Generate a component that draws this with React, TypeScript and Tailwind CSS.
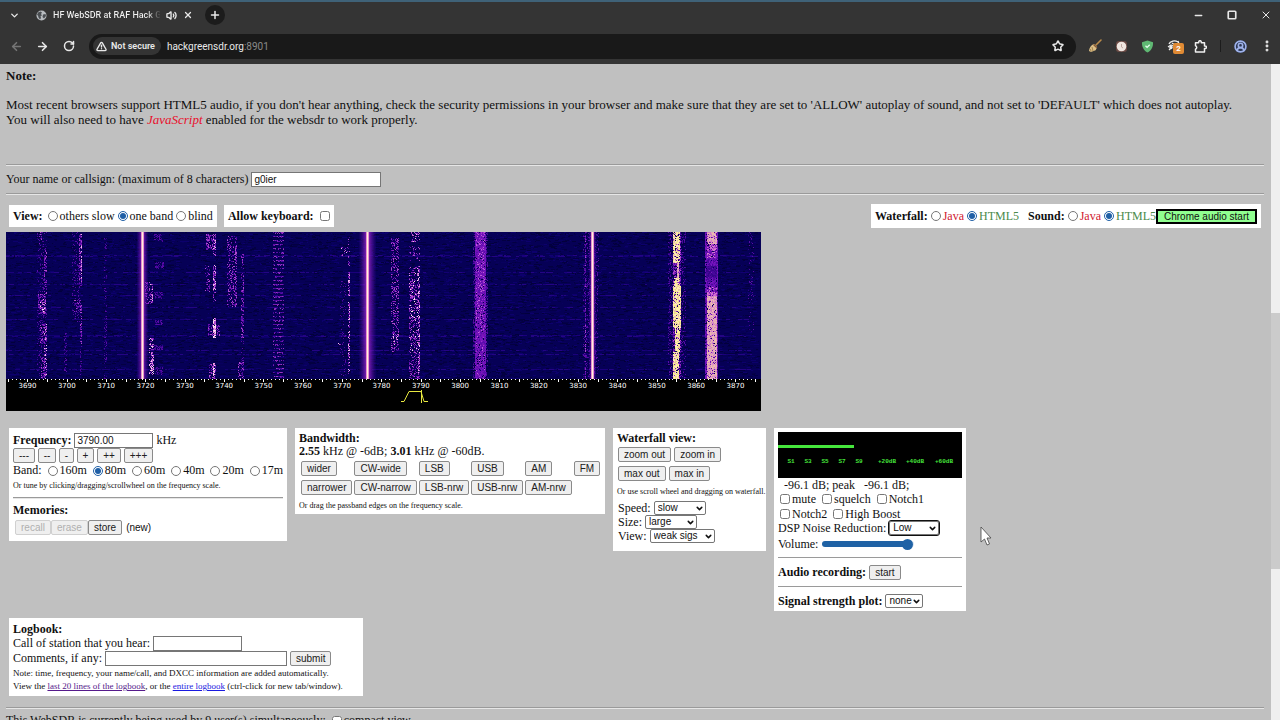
import {
  ArrowLeft,
  ArrowRight,
  ChevronDown,
  CircleUserRound,
  EllipsisVertical,
  Minus,
  Plus,
  RotateCw,
  Square,
  Star,
  TriangleAlert,
  Volume2,
  X,
} from "lucide-react";

// ---------- waterfall ----------

const WF_WIDTH = 755;
const WF_HEIGHT = 147;
const KHZ = 3.933; // px per kHz

const DIM = ["#2c0084", "#4a089a", "#5a0ca6"];
const VIOLET = ["#4a089a", "#6a10b0", "#8a22c0", "#b04acc"];
const PINK = ["#6a10b0", "#8a22c0", "#c060d0", "#f0b8ec"];
const HOT = ["#b04ad0", "#f0a0e0", "#ffe0f0"];
const YELLOW = ["#f4e48a", "#fff4a0", "#ffe8c0", "#e8c0a8"];
const PEACH = ["#e0a0c0", "#e4acb4", "#d080c8", "#ecbcb0"];
const ORCHID = ["#a838c8", "#c868d0", "#d880cc"];

type Streak = {
  x: number;
  w: number;
  y0: number;
  y1: number;
  density: number;
  colors: string[];
};

const s = (
  x: number,
  w: number,
  y0: number,
  y1: number,
  density: number,
  colors: string[]
): Streak => ({ x, w, y0, y1, density, colors });

const streaks: Streak[] = [
  // 3694
  s(31, 10, 0, 147, 0.16, DIM),
  s(33, 4, 0, 12, 0.3, VIOLET),
  s(32, 8, 62, 82, 0.5, VIOLET),
  s(34, 6, 66, 80, 0.15, HOT),
  s(38, 3, 18, 62, 0.35, VIOLET),
  s(34, 7, 92, 112, 0.3, VIOLET),
  s(38, 3, 92, 147, 0.4, PINK),
  s(35, 4, 125, 147, 0.35, VIOLET),
  // 3699, 3703
  s(58, 3, 96, 140, 0.3, DIM),
  s(66, 8, 0, 90, 0.14, DIM),
  s(73, 3, 0, 54, 0.45, VIOLET),
  s(75, 1, 0, 54, 0.4, PINK),
  s(68, 8, 68, 80, 0.22, VIOLET),
  s(74, 2, 70, 112, 0.5, VIOLET),
  s(74, 2, 112, 147, 0.3, DIM),
  s(98, 3, 5, 147, 0.2, DIM),
  // 3721
  s(139, 5, 50, 72, 0.35, VIOLET),
  s(144, 3, 52, 72, 0.45, PINK),
  s(148, 9, 2, 10, 0.5, DIM),
  s(149, 9, 30, 37, 0.5, DIM),
  s(148, 9, 60, 67, 0.6, DIM),
  s(149, 8, 88, 93, 0.6, DIM),
  s(148, 9, 113, 118, 0.6, DIM),
  s(149, 8, 135, 143, 0.5, DIM),
  s(143, 5, 106, 143, 0.45, PINK),
  s(145, 2, 120, 143, 0.5, HOT),
  // 3737
  s(200, 10, 2, 18, 0.5, VIOLET),
  s(207, 3, 6, 24, 0.6, PINK),
  s(199, 5, 33, 62, 0.35, VIOLET),
  s(207, 3, 33, 58, 0.7, PINK),
  s(207, 3, 58, 72, 0.3, VIOLET),
  s(202, 12, 92, 104, 0.35, VIOLET),
  s(207, 3, 86, 106, 0.8, HOT),
  s(203, 7, 132, 147, 0.4, VIOLET),
  s(207, 2, 131, 147, 0.8, HOT),
  // 3743
  s(221, 10, 4, 75, 0.3, VIOLET),
  s(229, 2, 5, 75, 0.4, VIOLET),
  s(235, 3, 22, 80, 0.45, VIOLET),
  s(235, 3, 82, 106, 0.4, VIOLET),
  s(235, 3, 106, 130, 0.2, DIM),
  s(232, 6, 130, 147, 0.35, VIOLET),
  // 3771
  s(335, 7, 15, 24, 0.25, PINK),
  s(342, 2, 5, 40, 0.3, VIOLET),
  s(342, 2, 40, 64, 0.6, PINK),
  s(342, 2, 70, 142, 0.55, PINK),
  s(334, 6, 48, 147, 0.12, DIM),
  s(332, 3, 111, 114, 0.5, PINK),
  // 3783
  s(385, 8, 6, 120, 0.3, VIOLET),
  s(386, 7, 100, 118, 0.2, PINK),
  // 3788
  s(405, 9, 0, 10, 0.3, PINK),
  s(403, 11, 14, 30, 0.2, VIOLET),
  s(403, 11, 34, 44, 0.3, PINK),
  s(403, 11, 46, 80, 0.34, VIOLET),
  s(403, 11, 84, 147, 0.34, VIOLET),
  s(412, 2, 34, 147, 0.4, PINK),
  s(403, 11, 46, 120, 0.1, HOT),
  // 3805
  s(469, 11, 0, 147, 0.9, ["#5a0cae", "#6c10b8", "#7c16c0", "#7214b4"]),
  s(470, 9, 0, 88, 0.2, ["#a036cc", "#c05cd8"]),
  s(470, 9, 88, 147, 0.1, ["#a036cc", "#c05cd8"]),
  s(467, 2, 0, 147, 0.4, DIM),
  s(480, 2, 0, 147, 0.4, DIM),
  // 3830 sideband
  s(579, 1, 0, 147, 0.6, VIOLET),
  s(577, 16, 0, 147, 0.22, DIM),
  // 3855
  s(662, 18, 0, 147, 0.25, DIM),
  s(667, 8, 0, 147, 0.6, VIOLET),
  s(667, 7, 0, 31, 0.75, YELLOW),
  s(671, 2, 31, 50, 0.9, PEACH),
  s(668, 6, 46, 62, 0.85, YELLOW),
  s(667, 8, 54, 96, 0.85, YELLOW),
  s(669, 5, 96, 120, 0.85, YELLOW),
  s(667, 6, 120, 147, 0.85, YELLOW),
  // 3864, fades down to violet and back
  s(699, 13, 0, 147, 0.85, ["#6a10b8", "#7c18c0", "#5808a0"]),
  s(701, 10, 0, 12, 0.85, PEACH),
  s(701, 10, 12, 18, 0.7, ORCHID),
  s(701, 10, 18, 26, 0.35, ORCHID),
  s(700, 11, 26, 34, 0.6, ["#48089c", "#6a10b8"]),
  s(700, 11, 34, 46, 0.9, ["#38048c", "#48089c"]),
  s(700, 11, 46, 54, 0.5, ["#48089c", "#6a10b8"]),
  s(701, 10, 54, 60, 0.35, ORCHID),
  s(701, 10, 60, 68, 0.8, ORCHID),
  s(701, 10, 64, 147, 0.88, PEACH),
  s(742, 6, 0, 100, 0.12, DIM),
];

function drawWaterfall() {
  // small LCG so that the noise is the same on every render
  let seed = 3790;
  const rnd = () => {
    seed = (seed * 1664525 + 1013904223) >>> 0;
    return seed / 4294967296;
  };
  const runs: { color: string; d: string[] }[] = [];
  const layer = (colors: string[]) => {
    const start = runs.length;
    colors.forEach((color) => runs.push({ color, d: [] }));
    return (x: number, y: number, w: number) => {
      const i = start + Math.floor(rnd() * colors.length);
      runs[i].d.push(`M${x} ${y}h${w}v1h-${w}z`);
    };
  };

  // background noise
  const noise = layer(["#02003c", "#04004a", "#08005e", "#0c006c", "#030042"]);
  for (let i = 0; i < 15000; i++) {
    const w = 1 + Math.floor(rnd() * 5);
    noise(Math.floor(rnd() * (WF_WIDTH - w)), Math.floor(rnd() * WF_HEIGHT), w);
  }

  // static crashes, faint lines over the whole width
  const crash = layer(["#120072", "#1a007c", "#240484"]);
  [23, 24, 40, 52, 63, 75, 87, 103, 104, 118, 122, 137].forEach((y) => {
    for (let x = 0; x < WF_WIDTH - 6; x += 3) {
      if (rnd() < 0.55) crash(x, y, 2 + Math.floor(rnd() * 4));
    }
  });

  streaks.forEach((k) => {
    const put = layer(k.colors);
    for (let y = k.y0; y < k.y1; y++) {
      for (let x = k.x; x < k.x + k.w; x++) {
        if (rnd() < k.density) put(x, y, 1);
      }
    }
  });

  // 3753, comb of short bars
  const comb = layer(["#5a0ca8", "#7a1cb4", "#9838c0", "#42089a"]);
  for (let y = 0; y < WF_HEIGHT; y += 4) {
    for (let x = 267; x < 278; x++) {
      if (rnd() < 0.75) comb(x, y, 1);
      if (rnd() < 0.25) comb(x, y + 1, 1);
    }
  }
  return runs;
}

const waterfall = drawWaterfall();

const carriers = [
  { x: 136, glow: 6 },
  { x: 361, glow: 9 },
  { x: 586, glow: 4 },
];

const Waterfall = () => (
  <svg
    width={WF_WIDTH}
    height={179}
    viewBox={`0 0 ${WF_WIDTH} 179`}
    className="block max-w-none bg-black"
    role="img"
    aria-label="Waterfall 3685 to 3876 kHz"
  >
    <defs>
      <linearGradient id="glow">
        <stop offset="0" stopColor="#5008a8" stopOpacity="0" />
        <stop offset="0.5" stopColor="#9a28c8" />
        <stop offset="1" stopColor="#5008a8" stopOpacity="0" />
      </linearGradient>
    </defs>
    <rect width={WF_WIDTH} height={WF_HEIGHT} fill="#060056" />
    <g shapeRendering="crispEdges">
      {waterfall.map((run, i) => (
        <path key={i} d={run.d.join("")} fill={run.color} />
      ))}
    </g>
    {carriers.map(({ x, glow }) => (
      <g key={x}>
        <rect x={x - glow + 0.5} width={glow * 2} height={WF_HEIGHT} fill="url(#glow)" />
        <rect x={x - 1} width="3" height={WF_HEIGHT} fill="#e890cc" />
        <rect x={x} width="1" height={WF_HEIGHT} fill="#fff0dc" />
      </g>
    ))}

    {/* frequency scale */}
    {Array.from({ length: 191 }, (_, i) => (
      <rect key={i} x={Math.round(1.8 + i * KHZ)} y="147" width="1" height={i % 5 === 0 ? 3 : 1} fill="#fff" />
    ))}
    {Array.from({ length: 19 }, (_, i) => (
      <text
        key={i}
        x={21.5 + i * KHZ * 10}
        y="156"
        textAnchor="middle"
        fill="#fff"
        fontSize="7"
        fontFamily="'DejaVu Sans', sans-serif"
      >
        {3690 + i * 10}
      </text>
    ))}
    <path d="M395 169.5h3l5-10h12l3 10h4M415.5 158v13" fill="none" stroke="#e8e840" strokeWidth="1" />
  </svg>
);

// ---------- S meter ----------

const meterLabels: [number, string][] = [
  [13, "S1"],
  [30, "S3"],
  [47, "S5"],
  [64, "S7"],
  [81, "S9"],
  [109, "+20dB"],
  [137, "+40dB"],
  [166, "+60dB"],
];

const SMeter = () => (
  <svg width="184" height="46" viewBox="0 0 184 46" className="block bg-black" role="img" aria-label="S meter">
    <rect y="13" width="76" height="3" fill="#46e63c" />
    {meterLabels.map(([x, label]) => (
      <text
        key={label}
        x={x}
        y="31"
        textAnchor="middle"
        fill="#46e63c"
        fontSize="6"
        fontWeight="bold"
        fontFamily="'Liberation Mono', monospace"
      >
        {label}
      </text>
    ))}
  </svg>
);

// ---------- form bits ----------

const sans = "font-['Liberation_Sans',sans-serif]";

const Btn = ({ children, disabled = false, className = "px-[5px]" }) => (
  <button
    type="button"
    disabled={disabled}
    className={`${sans} block h-[15px] rounded-[2px] border border-[#8a8a8a] bg-[#efefef] text-[10px] leading-[13px] whitespace-nowrap text-[#202020] disabled:border-[#d0d0d0] disabled:text-[#b0b0b0] ${className}`}
  >
    {children}
  </button>
);

const Radio = ({ name, label, checked = false, className = "" }) => (
  <label className={`flex items-center gap-[2px] whitespace-nowrap ${className}`}>
    <input type="radio" name={name} defaultChecked={checked} className="size-[10px] accent-[#1f5fa6]" />
    {label}
  </label>
);

const Check = ({ label }) => (
  <label className="flex items-center gap-[2px]">
    <input type="checkbox" className="size-[10px]" />
    {label}
  </label>
);

const Select = ({ id, options, className = "" }) => (
  <span className="inline-grid items-center">
    <select
      id={id}
      className={`${sans} col-start-1 row-start-1 h-[14px] appearance-none rounded-[2px] border border-[#767676] bg-white px-[3px] text-[10px] leading-[12px] ${className}`}
    >
      {options.map((o) => (
        <option key={o}>{o}</option>
      ))}
    </select>
    <ChevronDown
      size={9}
      strokeWidth={4}
      className="pointer-events-none col-start-1 row-start-1 mr-[2px] justify-self-end"
    />
  </span>
);

const field = "border border-[#767676] bg-white px-[2px] text-[10px] font-['Liberation_Sans',sans-serif]";

const Rule = () => <hr className="border-0 border-t border-[#9a9a9a] shadow-[0_1px_0_#e6e6e6]" />;

// ---------- browser frame ----------

const BrowserBar = () => (
  <header className="shrink-0 border-t-2 border-[#3f6278] bg-[#343434] font-['Roboto',sans-serif] text-[#e8e8e8]">
    <div className="flex h-[26px] items-center pr-2 pl-[9px]">
      <button type="button" aria-label="Search tabs">
        <ChevronDown size={11} strokeWidth={3} />
      </button>
      <div className="ml-4 flex items-center">
        <svg width="11" height="11" viewBox="0 0 22 22" aria-hidden="true">
          <circle cx="11" cy="11" r="10" fill="#b8bcc0" />
          <path d="M4 5l5-2 3 2-2 3 2 3-3 1 1 4-2 3-3-4-1-4-2-1zM14 9l5-1 1 4-4 5-3-3z" fill="#4a4e52" />
        </svg>
        <span className="ml-[6px] w-[107px] bg-linear-to-r from-[#f0f0f0] from-88% to-[#444] bg-clip-text text-[9px] font-medium whitespace-nowrap text-transparent">
          HF WebSDR at RAF Hack Gr
        </span>
        <Volume2 size={11} strokeWidth={3} className="ml-[6px]" />
        <button type="button" aria-label="Close tab" className="ml-[6px]">
          <X size={10} strokeWidth={3} />
        </button>
      </div>
      <button
        type="button"
        aria-label="New tab"
        className="ml-3 flex size-5 items-center justify-center rounded-full bg-[#1c1c1c]"
      >
        <Plus size={12} strokeWidth={3} />
      </button>
      <div className="ml-auto flex items-center gap-[23px]">
        <button type="button" aria-label="Minimize">
          <Minus size={11} strokeWidth={3} />
        </button>
        <button type="button" aria-label="Maximize">
          <Square size={10} strokeWidth={4} />
        </button>
        <button type="button" aria-label="Close">
          <X size={12} strokeWidth={2} />
        </button>
      </div>
    </div>

    <div className="flex h-9 items-center pr-[6px] pl-[10px]">
      <button type="button" aria-label="Back" className="text-[#757575]">
        <ArrowLeft size={13} strokeWidth={3} />
      </button>
      <button type="button" aria-label="Forward" className="ml-[13px]">
        <ArrowRight size={13} strokeWidth={3} />
      </button>
      <button type="button" aria-label="Reload" className="ml-[14px]">
        <RotateCw size={12} strokeWidth={3} />
      </button>
      <div className="ml-[14px] flex h-[25px] flex-1 items-center rounded-full bg-[#191919] pr-3 pl-1">
        <span className="flex h-[18px] items-center gap-1 rounded-full bg-[#343434] pr-[6px] pl-[3px] text-[9px] font-semibold">
          <TriangleAlert size={11} strokeWidth={3} />
          Not secure
        </span>
        <span className="ml-[6px] text-[10px]">
          hackgreensdr.org<span className="text-[#8a8a8a]">:8901</span>
        </span>
        <Star size={12} strokeWidth={3} className="ml-auto" />
      </div>
      <div className="ml-3 flex items-center gap-[13px]">
        <svg width="14" height="14" viewBox="0 0 14 14" aria-hidden="true">
          <path d="M13 1L8 6" stroke="#b98a4a" strokeWidth="1.6" strokeLinecap="round" />
          <path d="M6 5l3.2 3.2-1.6 3L3 13l-2-1c.2-3 2-6 5-7z" fill="#dcbf86" />
          <path d="M5.5 5.5l3.3 3.3" stroke="#8a5a34" strokeWidth="1.2" />
          <path d="M4 8l1 4M2.5 10l.5 2.5" stroke="#8a6a3a" strokeWidth=".7" />
        </svg>
        <svg width="13" height="13" viewBox="0 0 13 13" aria-hidden="true">
          <rect x="1" y="1" width="11" height="11" rx="3" fill="#6a4a44" />
          <circle cx="6.5" cy="6.5" r="4.8" fill="#efe6e0" />
          <path d="M6.5 4v3l1.5 1" fill="none" stroke="#c0a8a0" />
        </svg>
        <svg width="13" height="13" viewBox="0 0 13 13" aria-hidden="true">
          <path d="M6.5.5l5.5 1.8c.2 4.7-1.5 8.2-5.5 10.2C2.500 10.5.8 7 1 2.3z" fill="#5fb873" />
          <path d="M4.5 5.8l1.6 1.6 2.6-2.6" fill="none" stroke="#e8fff0" strokeWidth="1.3" />
        </svg>
        <span className="relative">
          <svg width="14" height="14" viewBox="0 0 14 14" aria-hidden="true">
            <path
              d="M2 5c1-3 6-4 9-2M1 8l3-2 2 1M5 4l3 2 4-1M2 11l2-2M11 2l1 3"
              fill="none"
              stroke="#f0f0f0"
              strokeWidth="1.3"
            />
            <circle cx="4" cy="8.5" r="1.7" fill="#f0f0f0" />
          </svg>
          <span className="absolute top-1 left-[6px] flex size-[11px] items-center justify-center rounded-[2px] bg-[#e08a34] text-[8px] font-bold text-white">
            2
          </span>
        </span>
        <svg width="13" height="13" viewBox="0 0 13 13" aria-hidden="true">
          <path
            d="M1.5 2.8h3.2V2a1.3 1.3 0 0 1 2.6 0v.8h3.2V6h.6a1.3 1.3 0 0 1 0 2.6h-.6V12h-9V9.2a1.8 1.8 0 0 0 0-3.4z"
            fill="none"
            stroke="#f0f0f0"
            strokeWidth="1.5"
            strokeLinejoin="round"
          />
        </svg>
        <span className="h-3 w-px bg-[#1c1c1c]" />
        <button type="button" aria-label="Profile" className="rounded-full bg-[#2a3550] text-[#9fb2ea]">
          <CircleUserRound size={13} strokeWidth={3} className="block" />
        </button>
        <button type="button" aria-label="Menu">
          <EllipsisVertical size={14} strokeWidth={3} />
        </button>
      </div>
    </div>
  </header>
);

// ---------- panels ----------

const Frequency = () => (
  <section className="w-[278px] bg-white px-1 pt-1 pb-[6px]">
    <div className="flex h-4 items-center gap-[3px]">
      <label htmlFor="freq" className="font-bold">
        Frequency:
      </label>
      <input id="freq" defaultValue="3790.00" className={`${field} h-[15px] w-[79px]`} />
      kHz
    </div>
    <div className="flex gap-[3px]">
      <Btn className="w-[22px]">---</Btn>
      <Btn className="w-[18px]">--</Btn>
      <Btn className="w-[15px]">-</Btn>
      <Btn className="w-[17px]">+</Btn>
      <Btn className="w-[24px]">++</Btn>
      <Btn className="w-[29px]">+++</Btn>
    </div>
    <div className="flex justify-between">
      Band:
      <Radio name="band" label="160m" />
      <Radio name="band" label="80m" checked />
      <Radio name="band" label="60m" />
      <Radio name="band" label="40m" />
      <Radio name="band" label="20m" />
      <Radio name="band" label="17m" />
    </div>
    <p className="pb-1 text-[8px]">Or tune by clicking/dragging/scrollwheel on the frequency scale.</p>
    <Rule />
    <p className="pt-[5px] font-bold">Memories:</p>
    <div className="flex items-center pt-[2px] pl-[2px]">
      <Btn disabled>recall</Btn>
      <Btn disabled>erase</Btn>
      <Btn>store</Btn>
      <span className={`${sans} ml-1 text-[10px]`}>(new)</span>
    </div>
  </section>
);

const bandwidthRows = [
  ["wider", "CW-wide", "LSB", "USB", "AM", "FM"],
  ["narrower", "CW-narrow", "LSB-nrw", "USB-nrw", "AM-nrw"],
];

const Bandwidth = () => (
  <section className="w-[310px] bg-white px-1 pt-1 pb-px">
    <p className="leading-[13px] font-bold">Bandwidth:</p>
    <p className="leading-[13px]">
      <b>2.55</b> kHz @ -6dB; <b>3.01</b> kHz @ -60dB.
    </p>
    <table className="border-separate border-spacing-[2px]">
      <tbody>
        {bandwidthRows.map((row) => (
          <tr key={row[0]}>
            {row.map((mode) => (
              <td key={mode} className="h-[17px] p-0 align-middle">
                <Btn>{mode}</Btn>
              </td>
            ))}
          </tr>
        ))}
      </tbody>
    </table>
    <p className="text-[8px]">Or drag the passband edges on the frequency scale.</p>
  </section>
);

const WaterfallView = () => (
  <section className="w-[153px] bg-white px-1 pt-[3px] pb-2 leading-[14px]">
    <p className="font-bold">Waterfall view:</p>
    <div className="flex gap-[3px] pt-[2px] pl-px">
      <Btn>zoom out</Btn>
      <Btn>zoom in</Btn>
    </div>
    <div className="flex gap-[3px] pt-1 pl-px">
      <Btn>max out</Btn>
      <Btn>max in</Btn>
    </div>
    <p className="pt-1 pb-[2px] text-[8px] whitespace-nowrap">Or use scroll wheel and dragging on waterfall.</p>
    <div className="flex gap-[3px] pl-px">
      <label htmlFor="speed">Speed:</label>
      <Select id="speed" options={["slow", "medium", "fast"]} className="w-[52px]" />
    </div>
    <div className="flex gap-[3px] pl-px">
      <label htmlFor="size">Size:</label>
      <Select id="size" options={["large", "medium", "small"]} className="w-[52px]" />
    </div>
    <div className="flex gap-[3px] pl-px">
      <label htmlFor="view">View:</label>
      <Select id="view" options={["weak sigs", "strong sigs"]} className="w-[65px]" />
    </div>
  </section>
);

const Receiver = () => (
  <section className="w-[192px] bg-white px-1 pt-1 pb-[2px] leading-[14px]">
    <SMeter />
    <p className="pl-[6px]">-96.1 dB; peak &nbsp; -96.1 dB;</p>
    <div className="flex gap-[6px] pl-[2px]">
      <Check label="mute" />
      <Check label="squelch" />
      <Check label="Notch1" />
    </div>
    <div className="flex gap-[6px] pt-px pl-[2px]">
      <Check label="Notch2" />
      <Check label="High Boost" />
    </div>
    <div className="flex gap-[3px]">
      <label htmlFor="dsp">DSP Noise Reduction:</label>
      <Select
        id="dsp"
        options={["Low", "Off", "Medium", "High"]}
        className="w-[50px] border-[#101010] outline outline-[#101010]"
      />
    </div>
    <div className="flex items-center gap-1 pt-[2px]">
      <label htmlFor="volume">Volume:</label>
      <input
        id="volume"
        type="range"
        defaultValue={98}
        className="h-[6px] w-[92px] appearance-none rounded-full bg-linear-to-r from-[#1f62a5] from-95% to-[#d8e4f0] to-95% [&::-webkit-slider-thumb]:size-[11px] [&::-webkit-slider-thumb]:appearance-none [&::-webkit-slider-thumb]:rounded-full [&::-webkit-slider-thumb]:bg-[#1f62a5]"
      />
    </div>
    <hr className="my-[6px] border-[#9a9a9a]" />
    <div className="flex h-4 items-center gap-[3px]">
      <b>Audio recording:</b>
      <Btn>start</Btn>
    </div>
    <hr className="my-[6px] border-[#9a9a9a]" />
    <div className="flex h-4 items-center gap-[3px]">
      <label htmlFor="plot" className="font-bold">
        Signal strength plot:
      </label>
      <Select id="plot" options={["none", "slow", "fast"]} className="w-[38px]" />
    </div>
  </section>
);

const Logbook = () => (
  <section className="mt-[7px] ml-[3px] w-[354px] bg-white px-1 pt-1 pb-[3px]">
    <p className="leading-[14px] font-bold">Logbook:</p>
    <div className="flex items-center gap-[3px]">
      <label htmlFor="call">Call of station that you hear:</label>
      <input id="call" className={`${field} h-[15px] w-[89px]`} />
    </div>
    <div className="flex items-center gap-[3px]">
      <label htmlFor="comments">Comments, if any:</label>
      <input id="comments" className={`${field} h-[15px] w-[182px]`} />
      <Btn>submit</Btn>
    </div>
    <p className="text-[9px] leading-[14px] whitespace-nowrap">
      Note: time, frequency, your name/call, and DXCC information are added automatically.
    </p>
    <p className="text-[9px] leading-[13px] whitespace-nowrap">
      View the{" "}
      <a href="#last" className="text-[#551a8b] underline">
        last 20 lines of the logbook
      </a>
      , or the{" "}
      <a href="#all" className="text-[#1a1ae0] underline">
        entire logbook
      </a>{" "}
      (ctrl-click for new tab/window).
    </p>
  </section>
);

export default function App() {
  return (
    <div className="flex h-screen flex-col overflow-hidden bg-[#c0c0c0] font-['Liberation_Serif',serif] text-[12px] leading-[15px] text-[#101010]">
      <BrowserBar />
      <div className="flex min-h-0 flex-1">
        <main className="min-w-0 flex-1 overflow-hidden pt-1 pr-[7px] pl-[6px]">
          <div className="text-[13px]">
            <p className="font-bold">Note:</p>
            <p className="pt-[14px] pb-[37px]">
              Most recent browsers support HTML5 audio, if you don't hear anything, check the security permissions in
              your browser and make sure that they are set to 'ALLOW' autoplay of sound, and not set to 'DEFAULT' which
              does not autoplay.
              <br />
              You will also need to have <i className="text-[#e8102c]">JavaScript</i> enabled for the websdr to work
              properly.
            </p>
          </div>
          <Rule />
          <div className="flex items-center gap-[3px] pt-[7px] pb-[6px]">
            <label htmlFor="callsign">Your name or callsign: (maximum of 8 characters)</label>
            <input id="callsign" defaultValue="g0ier" className={`${field} h-[15px] w-[130px]`} />
          </div>
          <Rule />

          <div className="flex items-center justify-between px-[3px] pt-[10px]">
            <div className="flex gap-[7px]">
              <div className="flex h-[22px] items-center gap-[3px] bg-white px-1">
                <b className="mr-[2px]">View:</b>
                <Radio name="viewmode" label="others slow" />
                <Radio name="viewmode" label="one band" checked />
                <Radio name="viewmode" label="blind" />
              </div>
              <div className="flex h-[22px] items-center gap-[6px] bg-white px-1">
                <label htmlFor="kbd" className="font-bold">
                  Allow keyboard:
                </label>
                <input id="kbd" type="checkbox" className="size-[10px]" />
              </div>
            </div>
            <div className="flex h-[24px] items-center gap-[3px] bg-white px-1">
              <b>Waterfall:</b>
              <Radio name="wf" label="Java" className="text-[#d02030]" />
              <Radio name="wf" label="HTML5" checked className="text-[#4a8a4a]" />
              <b className="ml-[6px]">Sound:</b>
              <Radio name="snd" label="Java" className="text-[#d02030]" />
              <div className="flex items-center">
                <Radio name="snd" label="HTML5" checked className="text-[#4a8a4a]" />
                <button
                  type="button"
                  className={`${sans} h-[15px] w-[101px] border-2 border-black bg-[#90ff90] text-[10px] leading-[11px]`}
                >
                  Chrome audio start
                </button>
              </div>
            </div>
          </div>

          <div className="pt-1">
            <Waterfall />
          </div>

          <div className="flex items-start gap-[8px] pt-[17px] pl-[3px]">
            <Frequency />
            <Bandwidth />
            <WaterfallView />
            <Receiver />
          </div>

          <Logbook />

          <div className="pt-[11px]">
            <Rule />
          </div>
          <div className="flex items-center gap-[6px] pt-[5px] whitespace-nowrap">
            This WebSDR is currently being used by 9 user(s) simultaneously:
            <Check label="compact view" />
          </div>
        </main>
        <div className="w-[9px] shrink-0 bg-[#efefef] pt-[249px]">
          <div className="h-[256px] bg-[#cbcbcb]" />
        </div>
      </div>

      {/* mouse pointer */}
      <svg
        width="12"
        height="20"
        viewBox="0 0 12 20"
        className="pointer-events-none absolute top-[526px] left-[980px]"
        aria-hidden="true"
      >
        <path d="M1 1v15l3.5-3 2.5 6 2.5-1-2.5-6H11z" fill="#fff" stroke="#444" strokeWidth=".8" />
      </svg>
    </div>
  );
}
